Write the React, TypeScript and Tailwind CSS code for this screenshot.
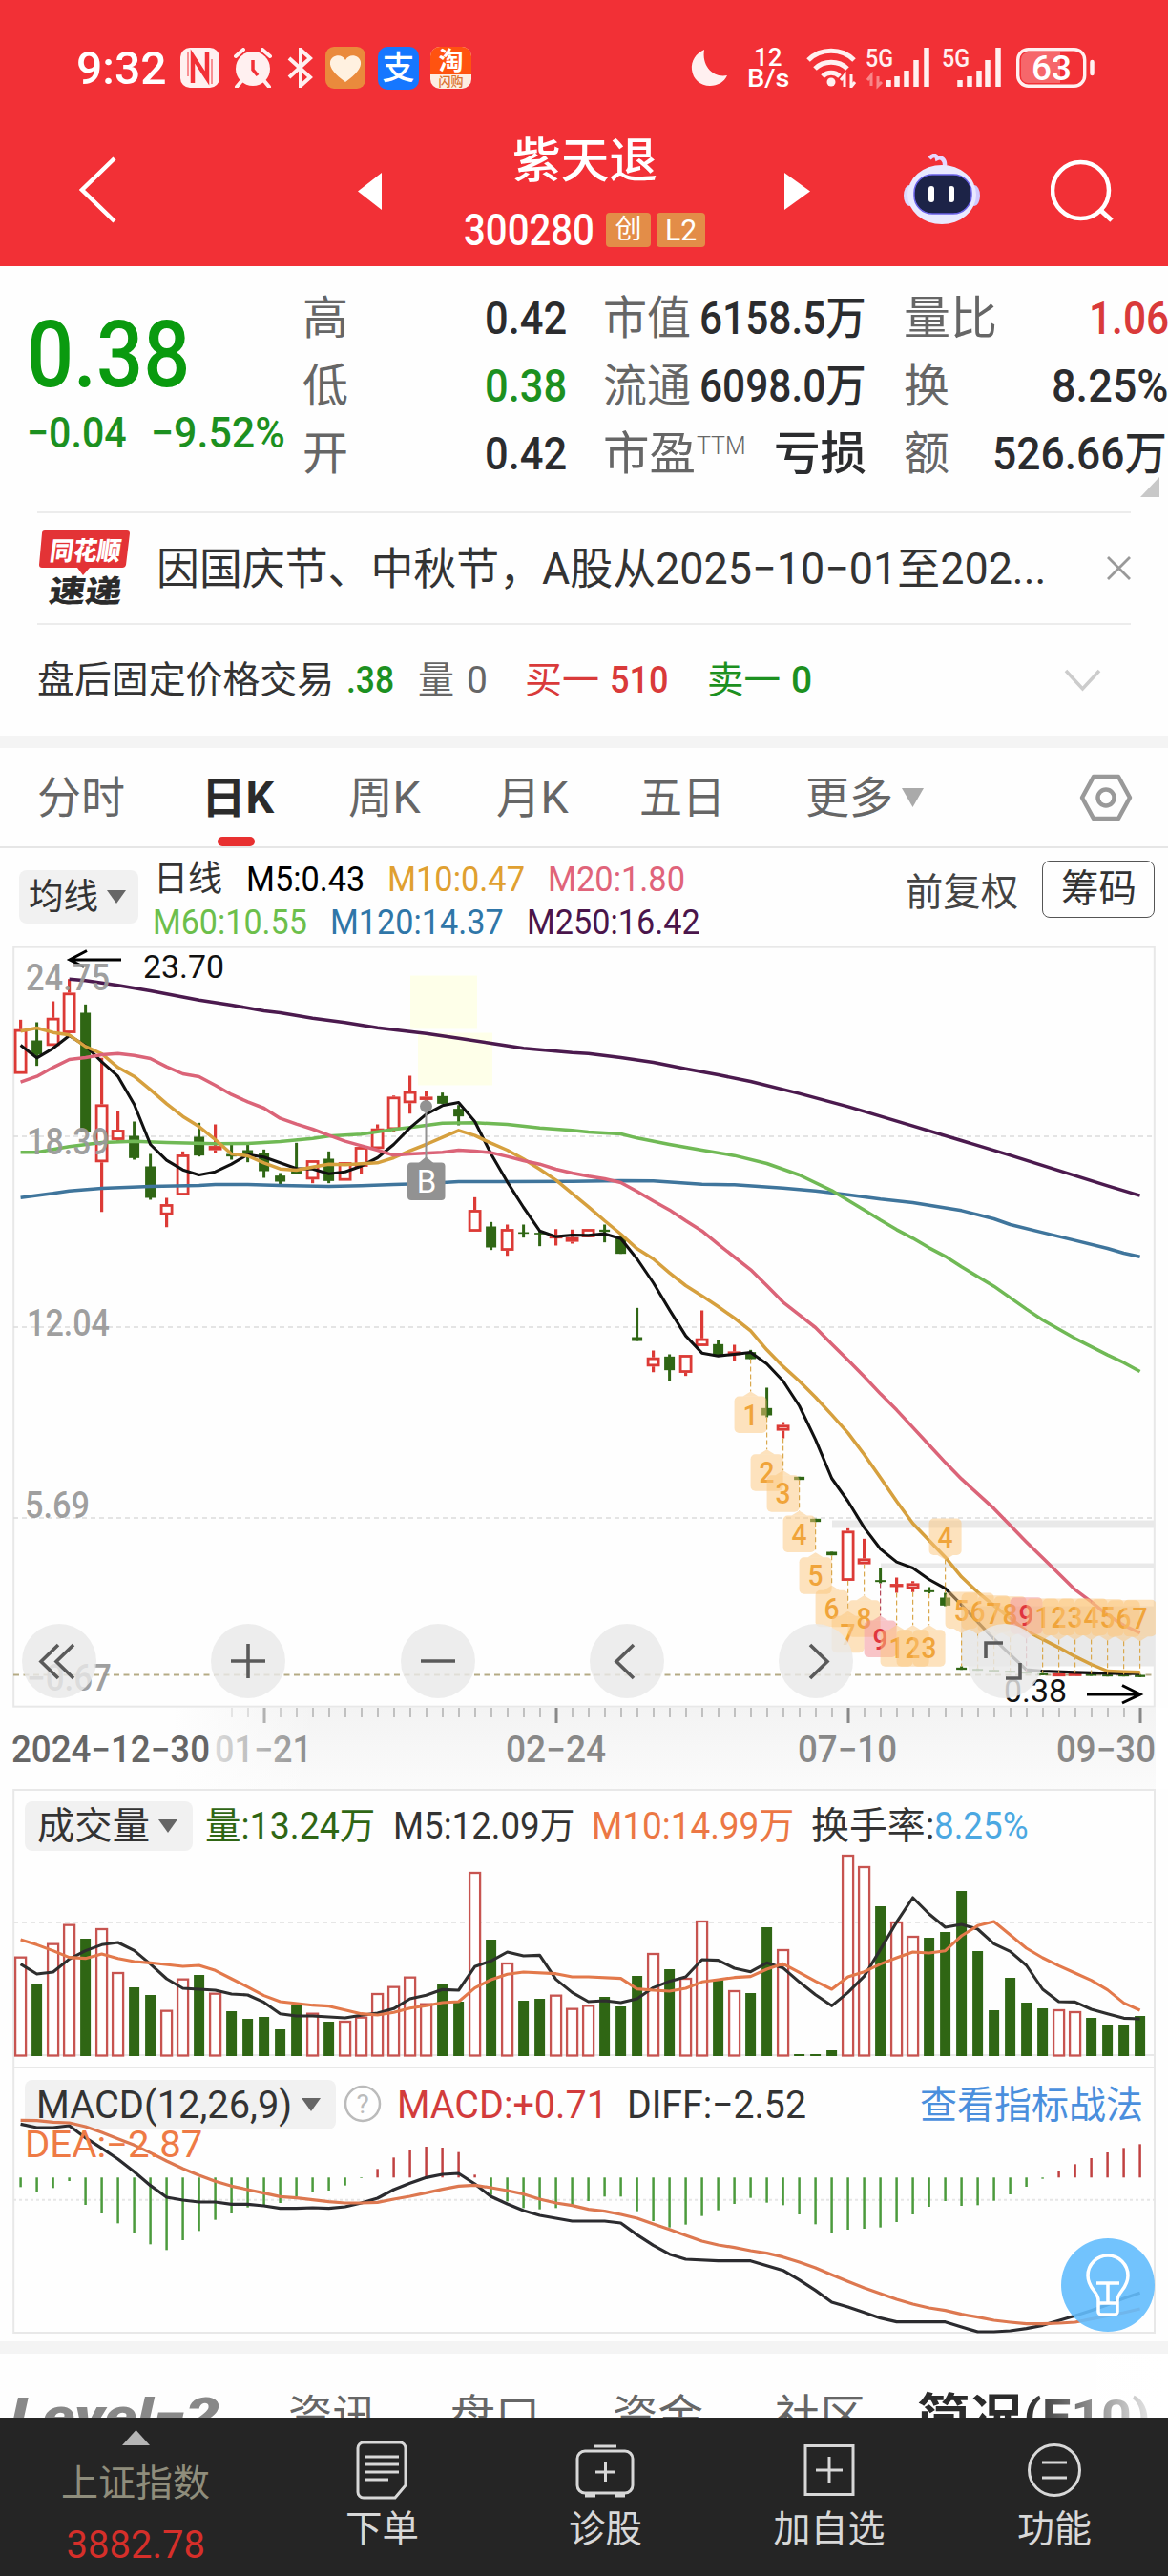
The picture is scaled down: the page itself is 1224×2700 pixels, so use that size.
import { useLayoutEffect, useRef } from "react";
import type { ReactNode } from "react";

/* Text whose glyphs are condensed or widened to fill the width of its box. */
function Fit({ className, children }: { className: string; children: ReactNode }) {
  const box = useRef<HTMLDivElement>(null);
  const inner = useRef<HTMLSpanElement>(null);
  useLayoutEffect(() => {
    if (!box.current || !inner.current) return;
    const k = box.current.clientWidth / inner.current.offsetWidth;
    inner.current.style.transform = `scaleX(${k})`;
  });
  return (
    <div ref={box} className={`flex shrink-0 items-center leading-none whitespace-nowrap ${className}`}>
      <span ref={inner} className="inline-block shrink-0 origin-left">
        {children}
      </span>
    </div>
  );
}

type TProps = { x: number; y: number; w?: number; s: number; fill: string; children: string; weight?: number; anchor?: "start" | "middle" };
const T = ({ x, y, w, s, fill, children, weight = 400, anchor = "start" }: TProps) => (
  <text x={x} y={y} fontSize={s} fill={fill} fontWeight={weight} textAnchor={anchor} textLength={w} lengthAdjust="spacingAndGlyphs">
    {children}
  </text>
);

const RED = "#dc3a36";
const GREEN = "#2f6614";
const px = (i: number) => 21.6 + 17 * i;

/* Chart values are stored in thirds of a pixel below the panel's origin. */
type Pt = [number, number];
const toPoints = (list: Pt[]) => list.map(([i, v]) => `${px(i)},${v / 3}`).join(" ");
const pairs = (s: string): Pt[] => s.split(",").map((p) => p.trim().split(" ").map(Number) as Pt);

const candles = `r 268 298 438 438,g 276 333 378 413,r 210 262 350 350,r 140 183 310 310,g 220 246 620 620,r 388 534 716 872,r 555 614 646 655,g 588 633 703 708,g 690 729 828 834,r 828 848 882 920,r 682 692 820 820,g 592 636 695 698,r 597 665 678 687,g 655 690 698 708,g 660 678 695 716,g 676 688 744 765,g 750 758 777 786,g 655 742 752 752,r 710 710 770 782,g 682 705 775 782,r 716 716 774 774,r 668 668 730 752,r 597 610 674 674,r 506 510 614 620,r 444 493 530 563,r 493 510 520 540,g 497 508 532 532,g 536 548 572 600,r 826 866 934 934,g 904 918 984 992,r 912 926 994 1010,g 912 936 941 953,g 930 938 943 980,r 926 946 954 978,r 928 952 966 972,r 926 926 952 952,g 912 928 935 968,g 946 950 1004 1004,g 1174 1266 1278 1278,r 1308 1330 1358 1376,g 1320 1327 1370 1404,r 1322 1322 1378 1388,r 1182 1270 1294 1294,g 1275 1288 1322 1322,r 1290 1311 1322 1340,g 1306 1313 1335 1335,g 1425 1489 1512 1518,r 1533 1542 1560 1584,g 1705 1705 1715 1715,g 1837 1837 1847 1847,g 1941 1941 1952 1952,r 1867 1875 2032 2032,r 1900 1962 1980 1980,g 1992 2030 2036 2040,r 2022 2042 2050 2070,r 2033 2040 2058 2068,g 2052 2062 2068 2072,g 2070 2085 2110 2112,g 2301 2305 2312 2312,g 2308 2309 2315 2315,g 2312 2312 2318 2318,g 2315 2315 2321 2321,g 2318 2318 2324 2324,g 2322 2323 2329 2329,r 2323 2323 2330 2330,r 2322 2322 2328 2328,g 2325 2325 2331 2331,g 2327 2327 2333 2333,g 2327 2327 2333 2333,g 2328 2328 2335 2335`
  .split(",")
  .map((row) => {
    const [c, ...v] = row.split(" ");
    return { up: c === "r", v: v.map((n) => Number(n) / 3) };
  });

const ma5 = pairs("0 348,1 388,2 358,3 318,4 350,5 400,6 446,7 534,8 660,9 710,10 740,11 756,12 746,13 722,14 692,15 700,16 718,17 736,18 737,19 752,20 746,21 728,22 702,23 660,24 608,25 565,26 538,27 528,28 588,29 690,30 778,31 858,32 932,33 950,34 945,35 946,36 941,37 956,38 1020,39 1095,40 1180,41 1262,42 1316,43 1325,44 1320,45 1314,46 1350,47 1404,48 1482,49 1588,50 1710,51 1782,52 1865,53 1932,54 1973,55 1992,56 2028,57 2056,58 2108,59 2162,60 2215,61 2264,62 2312,63 2316,65 2320,67 2323,69 2324");
const ma10 = pairs("0 304,1 294,2 308,3 316,4 352,5 375,6 418,7 446,8 488,9 532,10 572,11 604,12 645,13 690,14 696,15 718,16 737,17 741,18 731,19 722,20 724,22 718,23 702,24 680,25 660,26 638,27 616,28 632,29 656,30 678,31 706,32 738,33 772,34 814,35 856,36 900,37 942,38 988,39 1020,40 1064,41 1104,42 1136,43 1170,44 1206,45 1246,46 1306,47 1358,48 1404,49 1455,50 1510,51 1567,52 1635,53 1708,54 1782,55 1852,56 1905,57 1958,58 2020,59 2068,60 2110,61 2150,62 2190,63 2216,64 2242,65 2270,66 2295,67 2316,68 2318,69 2320");
const ma20 = pairs("0 464,1 446,2 418,3 393,4 387,5 378,6 374,7 380,8 390,9 416,10 438,11 447,12 474,13 503,14 526,15 546,16 578,17 596,18 612,19 631,20 650,21 664,22 678,23 694,24 690,26 685,27 678,28 681,29 686,30 698,31 711,32 722,33 738,34 750,35 760,36 768,37 780,38 808,39 838,40 866,41 900,42 932,43 974,44 1014,45 1054,46 1104,47 1156,48 1196,49 1236,50 1288,51 1338,52 1390,53 1444,54 1495,55 1550,56 1605,57 1660,58 1712,60 1805,61 1858,62 1910,63 1960,64 2010,65 2060,66 2098,67 2140,68 2172,69 2196");
const ma60 = pairs("0 685,1 685,3 667,5 654,7 650,9 654,12 658,14 657,16 651,18 641,19 634,21 628,23 613,24 607,25 600,26 593,28 592,30 597,32 608,34 616,35 621,37 627,38 640,40 660,42 678,44 695,46 720,48 756,50 805,52 866,53 898,54 928,55 955,56 985,57 1012,58 1045,60 1106,62 1178,63 1212,65 1270,67 1322,68 1346,69 1374");
const ma120 = pairs("0 827,2 814,3 806,5 798,8 792,11 789,12 786,14 786,16 789,19 792,21 790,23 786,25 783,27 777,30 777,34 776,37 774,39 775,42 785,44 787,47 797,49 806,51 818,53 832,55 843,58 868,60 894,61 912,63 937,65 962,67 987,68 1002,69 1013");
const ma250 = pairs("3 140,4 145,6 160,8 177,11 206,13 222,15 240,16 246,18 263,20 277,22 293,25 311,27 326,29 342,31 358,34 371,35 374,37 387,39 402,41 422,43 441,45 462,48 500,51 541,52 556,55 602,58 648,61 694,64 742,67 790,69 821");

const volumes = "r545 g627 r503 r443 g486 r456 r594 g639 g663 r713 r614 g600 r659 g714 g738 g732 g771 g696 r722 g747 r747 r734 r660 r638 r608 r692 g627 g684 r279 g489 r564 g681 g675 r665 r707 r697 g669 g699 g603 r534 g582 r612 r432 g615 r651 g657 g450 r522 g849 g849 g837 r225 r261 g384 r435 r480 g483 g465 g336 g525 g711 g609 g687 g705 r711 r717 g735 g759 g756 g729".split(" ");
const vol5 = pairs("0 566,1 597,2 591,3 550,4 524,5 505,6 498,7 523,8 566,9 612,10 642,12 648,13 660,14 663,15 686,16 722,17 729,18 729,20 735,21 727,22 720,23 706,24 675,25 664,26 646,27 648,28 574,29 556,30 528,31 540,32 538,33 614,34 655,35 684,36 681,37 687,38 675,39 640,40 620,41 606,42 552,43 554,44 579,45 590,46 562,47 578,48 622,49 662,50 697,51 655,52 604,53 520,54 434,55 357,56 408,57 450,58 441,59 456,60 502,61 526,62 570,63 645,64 684,65 685,66 708,67 722,68 736,69 738");
const vol10 = pairs("0 489,1 505,2 524,3 545,4 548,5 534,6 548,7 558,8 562,10 573,11 570,12 586,13 612,14 638,15 665,16 684,18 695,19 698,20 710,21 722,22 726,23 718,24 704,25 697,26 687,27 684,28 641,29 615,30 598,31 591,33 596,34 606,35 606,37 611,38 644,39 648,40 651,41 642,42 622,43 615,44 608,45 605,46 582,47 565,48 592,49 620,50 645,51 606,52 590,53 566,54 546,55 528,56 531,57 524,58 477,59 445,60 432,61 474,62 516,63 546,64 571,65 594,66 617,67 647,68 688,69 711");

const macd = [400, 414, 403, 381, 456, 483, 514, 545, 580, 598, 567, 538, 503, 483, 464, 458, 450, 430, 417, 411, 395, 372, 343, 307, 282, 273, 276, 290, 361, 425, 445, 466, 470, 466, 460, 444, 430, 430, 476, 507, 527, 518, 491, 473, 453, 434, 449, 457, 486, 517, 545, 534, 531, 527, 510, 486, 462, 444, 459, 457, 443, 423, 399, 374, 351, 328, 309, 291, 277, 265];
const diff = pairs("0 202,1 213,2 213,3 207,4 245,5 278,6 312,7 352,8 395,9 432,10 441,11 447,12 447,13 454,14 454,15 459,16 467,17 467,18 465,19 467,20 462,21 450,22 435,23 408,24 388,25 370,26 360,27 357,28 390,29 430,30 453,31 474,32 489,33 498,34 507,36 507,37 513,38 550,39 583,40 611,41 627,43 632,45 632,46 647,47 662,48 692,49 725,50 762,51 777,52 794,53 812,54 824,57 824,58 840,59 855,60 855,61 852,62 845,63 835,64 820,65 805,66 788,67 770,68 750,69 733");
const dea = pairs("0 190,1 191,2 196,3 198,4 210,5 228,6 248,7 268,8 292,9 318,10 342,11 363,12 382,13 397,14 408,15 419,16 430,17 434,18 440,19 446,20 450,21 450,22 448,23 438,24 429,25 418,26 407,27 397,28 394,29 402,30 411,31 422,32 438,33 450,34 458,35 470,36 476,37 486,38 498,39 516,40 533,41 552,42 570,43 582,44 590,45 600,46 608,47 620,48 636,49 654,50 676,51 697,52 717,53 735,54 753,55 768,56 780,57 788,58 800,59 809,60 819,61 825,62 830,63 830,64 828,65 825,66 815,67 805,68 795,69 783");

/* Sequence markers: candle index, label, top of the tag, and which side the tip is on. */
const tags: [number, string, number, "up" | "down"][] = [
  [45, "1", 1452, "up"], [46, "2", 1634, "up"], [47, "3", 1700, "up"], [48, "4", 1827, "up"],
  [49, "5", 1958, "up"], [50, "6", 2062, "up"], [51, "7", 2143, "up"], [52, "8", 2093, "up"],
  [53, "9", 2157, "up"], [54, "1", 2186, "up"], [55, "2", 2186, "up"], [56, "3", 2186, "up"],
  [57, "4", 1836, "down"], [58, "5", 2067, "down"], [59, "6", 2070, "down"], [60, "7", 2078, "down"],
  [61, "8", 2081, "down"], [62, "9", 2084, "down"], [63, "1", 2088, "down"], [64, "2", 2088, "down"],
  [65, "3", 2088, "down"], [66, "4", 2088, "down"], [67, "5", 2090, "down"], [68, "6", 2093, "down"],
  [69, "7", 2092, "down"],
];

const Line = ({ data, color, w = 3.5 }: { data: Pt[]; color: string; w?: number }) => (
  <polyline points={toPoints(data)} fill="none" stroke={color} strokeWidth={w} strokeLinejoin="round" />
);

function StatusBar() {
  return (
    <div className="flex h-[142px] items-center text-white">
      <Fit className="ml-[80px] h-[50px] w-[94px] text-[49px] font-medium">9:32</Fit>
      <svg className="ml-[15px] shrink-0" width="41" height="42" viewBox="0 0 41 42">
        <rect width="41" height="42" rx="10" fill="#fff0f0" />
        <path d="M13 37V9L28 32V5" fill="none" stroke="#f23036" strokeWidth="4.500" />
        <path d="M8 4v26M33 12v26" fill="none" stroke="#f23036" strokeWidth="1" />
      </svg>
      <svg className="ml-[15px] shrink-0" width="40" height="42" viewBox="0 0 40 42">
        <circle cx="20" cy="22" r="18" fill="#fff0f0" />
        <path d="M2 9l8-7M38 9l-8-7M8 35l-5 6M32 35l5 6" stroke="#fff0f0" strokeWidth="4" strokeLinecap="round" />
        <path d="M20 13v10l5 6" fill="none" stroke="#f23036" strokeWidth="3.500" />
      </svg>
      <svg className="ml-[16px] shrink-0" width="27" height="42" viewBox="0 0 27 42">
        <path d="M2 11l22 20-10 9V2l10 9L2 31" fill="none" stroke="#fff0f0" strokeWidth="4" />
      </svg>
      <svg className="ml-[13px] shrink-0" width="42" height="44" viewBox="0 0 42 44">
        <rect width="42" height="44" rx="9" fill="#ea8a3c" />
        <path d="M21 37C10 29 4 22 5 16c1-7 12-10 16-2 4-8 15-5 16 2 1 6-5 13-16 21z" fill="#fff1e0" />
      </svg>
      <div className="ml-[13px] flex h-[45px] w-[43px] shrink-0 items-center justify-center rounded-[10px] bg-[#1677ff] text-[34px] font-medium leading-none">支</div>
      <div className="ml-[12px] flex h-[44px] w-[43px] shrink-0 flex-col overflow-hidden rounded-[10px] bg-[#fdeee2] leading-none">
        <div className="flex h-[29px] items-center justify-center bg-[#ff5310] text-[26px] font-bold">淘</div>
        <div className="flex h-[15px] items-center justify-center text-[13px] font-medium text-[#d9702c]">闪购</div>
      </div>
      <svg className="ml-[230px] shrink-0" width="39" height="40" viewBox="0 0 39 40">
        <path d="M14 1C5 5 0 13 1 22c1 10 9 17 19 17 8 0 15-4 18-11C24 31 11 19 14 1z" fill="#fff0f0" />
      </svg>
      <div className="ml-[20px] flex flex-col items-center gap-[1px] font-medium">
        <Fit className="h-[22px] w-[30px] text-[26px]">12</Fit>
        <Fit className="h-[22px] w-[44px] text-[25px]">B/s</Fit>
      </div>
      <svg className="ml-[18px] shrink-0" width="54" height="42" viewBox="0 0 54 42" fill="none" stroke="#fff0f0" strokeWidth="5">
        <path d="M2 13C15 0 37 0 50 13M9 22c9-9 25-9 34 0M17 30c5-5 13-5 18 0" />
        <circle cx="26" cy="36" r="4.500" fill="#fff0f0" stroke="none" />
        <path d="M40 41V29l-4 5M47 28v13l4-5" strokeWidth="3" />
      </svg>
      <svg className="ml-[8px] shrink-0 overflow-visible" width="70" height="42" viewBox="0 0 70 42">
        <T x={0} y={20} w={29} s={26} weight={500} fill="#fff0f0">5G</T>
        <path d="M24 34v7M33 30v11M43 24v17M53 13v28M64 0v41" stroke="#fff0f0" strokeWidth="5.500" />
        <path d="M6 40V29l-4 5M13 30v10l4-4" stroke="#fff0f0" strokeOpacity="0.45" strokeWidth="3" fill="none" />
      </svg>
      <svg className="ml-[9px] shrink-0 overflow-visible" width="64" height="42" viewBox="0 0 64 42">
        <T x={1} y={20} w={29} s={26} weight={500} fill="#fff0f0">5G</T>
        <path d="M20 34v7M30 30v11M40 24v17M49 13v28M60 0v41" stroke="#fff0f0" strokeWidth="5.500" />
      </svg>
      <svg className="ml-[15px] shrink-0" width="84" height="42" viewBox="0 0 84 42">
        <rect x="1.700" y="1.700" width="70" height="38.500" rx="11" fill="none" stroke="#fff0f0" strokeWidth="3.400" />
        <path d="M12 5h34v32H12a7 7 0 0 1-7-7V12a7 7 0 0 1 7-7z" fill="#f6676b" />
        <path d="M79.500 15v12" stroke="#fff0f0" strokeWidth="4.500" strokeLinecap="round" />
        <T x={16} y={34} w={42} s={36} weight={500} fill="#fff">63</T>
      </svg>
    </div>
  );
}

function TitleBar() {
  return (
    <div className="flex h-[137px] items-start text-white">
      <svg className="mt-[22px] ml-[83px] shrink-0" width="40" height="70" viewBox="0 0 40 70">
        <path d="M37 2L3 35l34 33" fill="none" stroke="#fff" strokeWidth="4.500" />
      </svg>
      <svg className="mt-[39px] ml-[252px] shrink-0" width="25" height="39"><path d="M0 19.500L25 0v39z" fill="#fff" /></svg>
      <div className="ml-[85px] flex w-[256px] shrink-0 flex-col items-center">
        <Fit className="h-[54px] w-[152px] text-[50px] font-medium">紫天退</Fit>
        <div className="mt-[23px] flex h-[44px] w-full items-center">
          <Fit className="ml-[1px] h-[44px] w-[137px] text-[46px] font-medium">300280</Fit>
          <div className="ml-[12px] flex h-[36px] w-[47px] items-center justify-center rounded-[4px] bg-[#e38d48] text-[28px] leading-none">创</div>
          <div className="ml-[6px] flex h-[36px] w-[51px] items-center justify-center rounded-[4px] bg-[#e38d48] text-[32px] leading-none">
            <Fit className="h-[36px] w-[33px]">L2</Fit>
          </div>
        </div>
      </div>
      <svg className="mt-[39px] ml-[81px] shrink-0" width="27" height="39"><path d="M27 19.500L0 0v39z" fill="#fff" /></svg>
      <svg className="mt-[19px] ml-[98px] shrink-0" width="80" height="74" viewBox="0 0 80 74">
        <path d="M27 5c4-4 7-4 8 0 4-2 9 1 8 9" fill="none" stroke="#e6d8ff" strokeWidth="4.500" />
        <ellipse cx="6" cy="44" rx="6" ry="11" fill="#dcd9ff" />
        <ellipse cx="74" cy="44" rx="6" ry="11" fill="#cfcaff" />
        <ellipse cx="40" cy="43" rx="36" ry="31" fill="#e9e9ff" />
        <rect x="11" y="22" width="60" height="41" rx="19" fill="#1c2347" stroke="#6a62e8" strokeWidth="1.500" />
        <rect x="26" y="34" width="6" height="17" rx="3" fill="#fff" />
        <rect x="47" y="34" width="6" height="17" rx="3" fill="#fff" />
      </svg>
      <svg className="mt-[25px] ml-[74px] shrink-0" width="68" height="68" viewBox="0 0 68 68">
        <circle cx="31.500" cy="32.500" r="29.500" fill="none" stroke="#fff" strokeWidth="4.500" />
        <path d="M52 53l12 11" stroke="#fff" strokeWidth="5" />
      </svg>
    </div>
  );
}

function Quotes() {
  return (
    <div className="relative flex h-[257px] overflow-hidden">
      <div className="w-[316px] shrink-0 text-[#0a9a0f]">
        <Fit className="mt-[44px] ml-[28px] h-[98px] w-[171px] text-[97px] font-medium">0.38</Fit>
        <div className="mt-[10px] flex h-[44px] text-[45px] text-[#1c9020]">
          <Fit className="ml-[28px] h-[44px] w-[105px] font-medium">−0.04</Fit>
          <Fit className="ml-[25px] h-[44px] w-[141px] font-medium">−9.52%</Fit>
        </div>
      </div>
      <div className="mt-[19px] flex flex-col text-[48px] text-[#2b2c2e]">
        <div className="flex h-[71px] items-center">
          <Fit className="ml-[1px] h-12 w-[48px] text-[#666]">高</Fit>
          <Fit className="ml-[143px] h-12 w-[86px] font-medium">0.42</Fit>
          <Fit className="ml-[38px] h-12 w-[92px] text-[#666]">市值</Fit>
          <Fit className="ml-[9px] h-12 w-[175px] font-medium">6158.5万</Fit>
          <Fit className="ml-[39px] h-12 w-[98px] text-[#666]">量比</Fit>
          <Fit className="ml-[96px] h-12 w-[84px] font-medium text-[#d93a3a]">1.06</Fit>
        </div>
        <div className="flex h-[71px] items-center">
          <Fit className="ml-[1px] h-12 w-[48px] text-[#666]">低</Fit>
          <Fit className="ml-[143px] h-12 w-[86px] font-medium text-[#1c9020]">0.38</Fit>
          <Fit className="ml-[38px] h-12 w-[92px] text-[#666]">流通</Fit>
          <Fit className="ml-[9px] h-12 w-[175px] font-medium">6098.0万</Fit>
          <Fit className="ml-[39px] h-12 w-[48px] text-[#666]">换</Fit>
          <Fit className="ml-[107px] h-12 w-[123px] font-medium">8.25%</Fit>
        </div>
        <div className="flex h-[71px] items-center">
          <Fit className="ml-[1px] h-12 w-[48px] text-[#666]">开</Fit>
          <Fit className="ml-[143px] h-12 w-[86px] font-medium">0.42</Fit>
          <Fit className="ml-[38px] h-12 w-[97px] text-[#666]">市盈</Fit>
          <Fit className="mb-[16px] ml-[1px] h-6 w-[52px] text-[25px] font-light text-[#666]">TTM</Fit>
          <Fit className="ml-[29px] h-12 w-[97px] font-medium">亏损</Fit>
          <Fit className="ml-[39px] h-12 w-[48px] text-[#666]">额</Fit>
          <Fit className="ml-[45px] h-12 w-[183px] font-medium">526.66万</Fit>
        </div>
      </div>
      <svg className="absolute right-[9px] bottom-[15px]" width="20" height="21"><path d="M20 0v21H0z" fill="#c8c8c8" /></svg>
    </div>
  );
}

function News() {
  return (
    <>
      <div className="mx-[39px] flex h-[117px] items-center border-t-2 border-[#ececec] text-[46px] text-[#333]">
        <svg className="mb-[3px] shrink-0 overflow-visible" width="98" height="80" viewBox="0 0 98 80">
          <path d="M8 2h86a3 3 0 0 1 3 3l-4 33a4 4 0 0 1-4 3H55l-7 8-6-8H5a3 3 0 0 1-3-3L5 5a3 3 0 0 1 3-3z" fill="#e33336" />
          <g transform="skewX(-8)">
            <T x={17} y={33} w={74} s={27} weight={900} fill="#fff">同花顺</T>
            <T x={22} y={77} w={76} s={32} weight={900} fill="#2b2b2b">速递</T>
          </g>
        </svg>
        <Fit className="ml-[27px] h-[50px] w-[932px]">因国庆节、中秋节，A股从2025−10−01至202...</Fit>
        <svg className="ml-[63px] shrink-0" width="27" height="27" viewBox="0 0 27 27"><path d="M2 2l23 23M25 2L2 25" stroke="#999" strokeWidth="2.800" /></svg>
      </div>
      <div className="mx-[39px] flex h-[118px] items-center border-t-2 border-[#ececec] text-[39px] text-[#333]">
        <Fit className="h-[44px] w-[311px]">盘后固定价格交易</Fit>
        <Fit className="ml-[13px] h-[44px] w-[50px] font-medium text-[#1c9020]">.38</Fit>
        <Fit className="ml-[25px] h-[44px] w-[38px] text-[#666]">量</Fit>
        <Fit className="ml-[13px] h-[44px] w-[22px] text-[#666]">0</Fit>
        <Fit className="ml-[39px] h-[44px] w-[78px] text-[#d93a3a]">买一</Fit>
        <Fit className="ml-[11px] h-[44px] w-[62px] font-medium text-[#d93a3a]">510</Fit>
        <Fit className="ml-[40px] h-[44px] w-[77px] text-[#1c9020]">卖一</Fit>
        <Fit className="ml-[11px] h-[44px] w-[22px] font-medium text-[#1c9020]">0</Fit>
        <svg className="ml-[264px] shrink-0" width="39" height="24" viewBox="0 0 39 24"><path d="M2 2l17.500 19L37 2" fill="none" stroke="#ccc" strokeWidth="3.500" /></svg>
      </div>
      <div className="h-[13px] bg-[#f4f4f4]" />
    </>
  );
}

function PeriodTabs() {
  return (
    <div className="flex h-[105px] items-center border-b-2 border-[#e6e6e6] text-[46px] text-[#666]">
      <Fit className="ml-[39px] h-[52px] w-[92px]">分时</Fit>
      <div className="relative ml-[80px] flex h-full items-center font-bold text-[#2b2b2b]">
        <Fit className="h-[52px] w-[76px]">日K</Fit>
        <div className="absolute bottom-0 left-[17px] h-[10px] w-[39px] rounded-[5px] bg-[#e83030]" />
      </div>
      <Fit className="ml-[78px] h-[52px] w-[76px]">周K</Fit>
      <Fit className="ml-[79px] h-[52px] w-[76px]">月K</Fit>
      <Fit className="ml-[74px] h-[52px] w-[90px]">五日</Fit>
      <Fit className="ml-[84px] h-[52px] w-[92px]">更多</Fit>
      <svg className="ml-[8px] shrink-0" width="25" height="20"><path d="M1 0h23l-11.500 20z" fill="#aaa" /></svg>
      <svg className="ml-[162px] shrink-0" width="56" height="50" viewBox="0 0 56 50" fill="none" stroke="#999" strokeWidth="4.500" strokeLinejoin="round">
        <path d="M15 3h26l12 22-12 22H15L3 25z" />
        <circle cx="28" cy="25" r="8.500" />
      </svg>
    </div>
  );
}

function Averages() {
  return (
    <div className="flex h-[103px] items-start text-[37px] text-[#333]">
      <div className="mt-[23px] ml-[20px] flex h-[56px] w-[125px] shrink-0 items-center rounded-[8px] bg-[#f1f1f1]">
        <Fit className="ml-[10px] h-[44px] w-[73px]">均线</Fit>
        <svg className="ml-[9px]" width="20" height="14"><path d="M0 0h20L10 14z" fill="#666" /></svg>
      </div>
      <div className="ml-[16px] flex w-[600px] shrink-0 flex-col pt-[10px]">
        <div className="flex h-[45px] items-center">
          <Fit className="h-[40px] w-[72px]">日线</Fit>
          <Fit className="ml-[25px] h-[40px] w-[124px] text-black">M5:0.43</Fit>
          <Fit className="ml-[24px] h-[40px] w-[144px] text-[#e0a030]">M10:0.47</Fit>
          <Fit className="ml-[24px] h-[40px] w-[144px] text-[#e0647a]">M20:1.80</Fit>
        </div>
        <div className="flex h-[45px] items-center">
          <Fit className="-ml-[1px] h-[40px] w-[162px] text-[#6cbf4b]">M60:10.55</Fit>
          <Fit className="ml-[24px] h-[40px] w-[182px] text-[#2f76a8]">M120:14.37</Fit>
          <Fit className="ml-[24px] h-[40px] w-[182px] text-[#4a154b]">M250:16.42</Fit>
        </div>
      </div>
      <Fit className="mt-[24px] ml-[188px] h-[46px] w-[118px] text-[40px] text-[#444]">前复权</Fit>
      <div className="mt-[13px] ml-[25px] flex h-[60px] w-[118px] shrink-0 items-center justify-center rounded-[8px] border-[1.5px] border-[#555]">
        <Fit className="h-[46px] w-[79px] text-[40px]">筹码</Fit>
      </div>
    </div>
  );
}

function CandleChart() {
  return (
    <div className="relative mx-[13px] h-[798px]">
      <svg className="block" width="1198" height="798" viewBox="13 12.500 1198 798">
        <rect x="14.200" y="13.200" width="1195.600" height="796" fill="#fefefe" stroke="#e8e8e8" strokeWidth="2" />
        <path d="M14 211.500H1210M14 411.500H1210M14 611.500H1210" stroke="#dcdcdc" strokeWidth="1.300" strokeDasharray="5 4" />
        <path d="M430 43h70v56h-70zM438 103h78v55h-78z" fill="#feffe9" />
        <path d="M872 614h338v8H872zM923 659h287v5H923zM1007 704h203v63h-203z" fill="#e9e9e9" />
        <path d="M14 776H1210" stroke="#b5ab85" strokeWidth="2" strokeDasharray="6 4.500" />
        {candles.map(({ up, v: [h, t, b, l] }, i) => (
          <g key={i}>
            {up ? (
              <>
                <path d={`M${px(i)} ${h}V${t}M${px(i)} ${b}V${l}`} stroke={RED} strokeWidth="3.200" />
                <rect x={px(i) - 5.5} y={t + 1.3} width="11" height={Math.max(b - t - 2.6, 0.6)} fill="#fff" stroke={RED} strokeWidth="2.800" />
              </>
            ) : (
              <>
                <path d={`M${px(i)} ${h}V${l}`} stroke={GREEN} strokeWidth="3" />
                <rect x={px(i) - 5.5} y={t} width="11" height={b - t} fill={GREEN} />
              </>
            )}
          </g>
        ))}
        <Line data={ma250} color="#4b1a4e" />
        <Line data={ma120} color="#3f759c" />
        <Line data={ma60} color="#70b955" />
        <Line data={ma5} color="#111" w={3.1} />
        <Line data={ma10} color="#d6a03e" />
        <Line data={ma20} color="#db6478" />
        {tags.map(([i, label, top, tip]) => {
          const x = px(i);
          const y = top / 3;
          const c = candles[i].v;
          const hot = label === "9";
          const line = tip === "up" ? `M${x} ${c[3]}V${y - 5}` : `M${x} ${y + 43}V${c[0]}`;
          const arrow = tip === "up" ? `M${x - 8} ${y}l8 -5 8 5z` : `M${x - 8} ${y + 38.5}l8 5 8 -5z`;
          return (
            <g key={i}>
              <path d={line} stroke={hot ? "#b5485a" : "#d9a84e"} strokeWidth="1.200" strokeDasharray="5 3" />
              <g fill={hot ? "#f28a90" : "#fcc67c"} fillOpacity="0.5">
                <rect x={x - 17} y={y} width="34" height="38.500" rx="5" />
                <path d={arrow} />
              </g>
              <T x={x - 8} y={y + 30} w={16} s={32} weight={500} fill={hot ? "#e0353f" : "#f0a43a"}>{label}</T>
            </g>
          );
        })}
        <g>
          <circle cx="446.500" cy="180" r="6.500" fill="#929292" />
          <path d="M446.500 180v60" stroke="#929292" strokeWidth="2" />
          <path d="M438 240l8.500-7 8.500 7z" fill="#929292" />
          <rect x="427" y="239" width="39.500" height="39.500" rx="4" fill="#929292" />
          <T x={447} y={270} s={33} fill="#fff" anchor="middle">B</T>
        </g>
        <path d="M127 26.500H73M91 17L73 26.500 88 34" fill="none" stroke="#000" strokeWidth="3" />
        <T x={150} y={45} w={85} s={34} fill="#111">23.70</T>
        <g fillOpacity="0.95">
          <T x={27} y={58} w={88} s={38} weight={500} fill="#999">24.75</T>
          <T x={28} y={230} w={87} s={38} weight={500} fill="#999">18.39</T>
          <T x={28} y={420} w={87} s={38} weight={500} fill="#999">12.04</T>
          <T x={26} y={611} w={68} s={38} weight={500} fill="#999">5.69</T>
          <T x={28} y={792} w={89} s={38} weight={500} fill="#999">−0.67</T>
        </g>
        <T x={1052} y={804} w={66} s={33} fill="#111">0.38</T>
        <path d="M1139 796.500h55M1176 787l19 9.500-19 9" fill="none" stroke="#000" strokeWidth="3" />
      </svg>
      <div className="absolute top-[710px] left-[10px] flex gap-[120.3px]">
        {[
          "M38 22L20 39.500 38 57M54 22L36 39.500 54 57",
          "M21 39h36M39 21v36",
          "M21 39h36",
          "M46 22L28 39.500 46 57",
          "M33 22l18 17.500L33 57",
          "M19 36V20h18M55 41v16H40",
        ].map((d) => (
          <svg key={d} width="78" height="78" viewBox="0 0 78 78">
            <circle cx="39" cy="39" r="39" fill="#e9e9e9" fillOpacity="0.82" />
            <path d={d} fill="none" stroke="#5a5a5a" strokeWidth="3.600" />
          </svg>
        ))}
      </div>
    </div>
  );
}

function DateAxis() {
  const ticks = Array.from({ length: 57 }, (_, k) => k + 13);
  return (
    <div className="h-[85px] bg-linear-to-b from-[#f3f3f3] to-[#fbfbfb]">
      <svg className="block" width="1224" height="85" viewBox="0 0 1224 85">
        <defs>
          <linearGradient id="fade" x1="0" x2="1">
            <stop offset="0" stopColor="#fefefe" />
            <stop offset="0.550" stopColor="#fefefe" />
            <stop offset="1" stopColor="#fefefe" stopOpacity="0" />
          </linearGradient>
        </defs>
        {ticks.map((i) => {
          const major = (i - 15) % 18 === 0;
          return <path key={i} d={`M${px(i) + 0.4} 0V${major ? 16 : 10}`} stroke={major ? "#888" : "#bbb"} strokeWidth={major ? 3 : 1.8} />;
        })}
        <T x={225} y={57} w={102} s={38} weight={500} fill="#888">01−21</T>
        <rect width="330" height="85" fill="url(#fade)" />
        <rect x="1211" width="13" height="85" fill="#fff" />
        <T x={530} y={57} w={105} s={38} weight={500} fill="#888">02−24</T>
        <T x={836} y={57} w={104} s={38} weight={500} fill="#888">07−10</T>
        <T x={1107} y={57} w={104} s={38} weight={500} fill="#888">09−30</T>
        <T x={12} y={57} w={208} s={38} weight={500} fill="#666">2024−12−30</T>
      </svg>
    </div>
  );
}

function VolumePanel() {
  return (
    <div className="relative mx-[13px] h-[291px]">
      <svg className="block" width="1198" height="291" viewBox="13 5 1198 291">
        <path d="M14.200 296V6H1210v290M14 284H1210" fill="none" stroke="#e8e8e8" strokeWidth="2" />
        <path d="M14 145H1210" stroke="#e6e6e6" strokeWidth="2" strokeDasharray="5 4" />
        {volumes.map((item, i) => {
          const top = Number(item.slice(1)) / 3;
          return item[0] === "r" ? (
            <rect key={i} x={px(i) - 5.5} y={top} width="11" height={284.5 - top} fill="#fff" stroke="#c75450" strokeWidth="2.300" />
          ) : (
            <rect key={i} x={px(i) - 5.5} y={top} width="11" height={285 - top} fill={GREEN} />
          );
        })}
        <Line data={vol5} color="#2e2e2e" w={3.1} />
        <Line data={vol10} color="#e3794b" w={3.1} />
      </svg>
      <div className="absolute top-[13px] left-[13px] flex h-[52px] items-center text-[39px] text-[#333]">
        <div className="flex h-[52px] w-[176px] items-center rounded-[8px] bg-[#f1f1f1]">
          <Fit className="ml-[13px] h-[44px] w-[118px]">成交量</Fit>
          <svg className="ml-[9px]" width="20" height="14"><path d="M0 0h20L10 14z" fill="#666" /></svg>
        </div>
        <Fit className="ml-[13px] h-[44px] w-[178px] text-[#2f6614]">量:13.24万</Fit>
        <Fit className="ml-[19px] h-[44px] w-[190px]">M5:12.09万</Fit>
        <Fit className="ml-[18px] h-[44px] w-[212px] text-[#ec7744]">M10:14.99万</Fit>
        <Fit className="ml-[18px] h-[44px] w-[129px]">换手率:</Fit>
        <Fit className="h-[44px] w-[99px] text-[#4ba8e2]">8.25%</Fit>
      </div>
    </div>
  );
}

function MacdPanel() {
  return (
    <div className="relative mx-[13px] h-[280px]">
      <div className="absolute top-[14px] left-[13px] h-[52px] w-[326px] rounded-[8px] bg-[#f1f1f1]" />
      <svg className="relative block" width="1198" height="280" viewBox="13 7 1198 280">
        <path d="M14.200 8H1210v278H14.200z" fill="none" stroke="#e8e8e8" strokeWidth="2" />
        <path d="M14 146.700H1210" stroke="#e6e6e6" strokeWidth="2" strokeDasharray="3 3" />
        {macd.map((v, i) => (
          <path key={i} d={`M${px(i)} 123.300V${v / 3}`} stroke={v > 370 ? "#4b9a3c" : "#c04040"} strokeWidth="2.500" />
        ))}
        <Line data={diff} color="#2b2b2f" w={3.2} />
        <Line data={dea} color="#dd7850" w={3.2} />
        <circle cx="380" cy="46" r="18" fill="none" stroke="#bbb" strokeWidth="2.500" />
        <T x={380} y={56} s={28} fill="#bbb" anchor="middle">?</T>
        <path d="M316 40h20l-10 14z" fill="#666" />
      </svg>
      <div className="absolute top-[19px] left-[25px] flex h-[44px] text-[40px] text-[#333]">
        <Fit className="h-[44px] w-[268px]">MACD(12,26,9)</Fit>
        <Fit className="ml-[110px] h-[44px] w-[221px] text-[#d23c3c]">MACD:+0.71</Fit>
        <Fit className="ml-[20px] h-[44px] w-[188px]">DIFF:−2.52</Fit>
        <Fit className="ml-[119px] h-[44px] w-[234px] text-[#4a8fdd]">查看指标战法</Fit>
      </div>
      <Fit className="absolute top-[61px] left-[13px] h-[42px] w-[186px] text-[38px] text-[#ee7a45]">DEA:−2.87</Fit>
      <svg className="absolute top-[179px] left-[1098px]" width="100" height="100" viewBox="0 0 100 100">
        <circle cx="50" cy="50" r="49" fill="#63bcfd" fillOpacity="0.9" />
        <g fill="none" stroke="#fff" strokeWidth="3.500">
          <path d="M40 66c0-9-11-12-11-26a21 21 0 0 1 42 0c0 14-11 17-11 26v12a3 3 0 0 1-3 3H43a3 3 0 0 1-3-3z" />
          <path d="M40 69h20M38 48h24M50 48v20" />
        </g>
      </svg>
    </div>
  );
}

function InfoTabs() {
  return (
    <div className="relative flex h-[67px] items-start overflow-hidden pt-[38px] text-[46px] text-[#666]">
      <Fit className="ml-[11px] h-[54px] w-[220px] text-[50px] font-black text-[#888] italic">Level−2</Fit>
      <Fit className="ml-[71px] h-[54px] w-[93px]">资讯</Fit>
      <Fit className="ml-[77px] h-[54px] w-[94px]">盘口</Fit>
      <Fit className="ml-[76px] h-[54px] w-[95px]">资金</Fit>
      <Fit className="ml-[75px] h-[54px] w-[95px]">社区</Fit>
      <Fit className="ml-[54px] h-[54px] w-[244px] text-[49px] font-bold text-[#2b2b2b]">简况(F10)</Fit>
      <div className="absolute inset-y-0 right-0 w-[150px] bg-linear-to-r from-white/0 to-white" />
    </div>
  );
}

function BottomNav() {
  return (
    <div className="flex h-[166px] items-start overflow-hidden bg-[#252525] text-[39px] text-[#d8d8d8]">
      <div className="flex w-[284px] shrink-0 flex-col items-center pt-[13px]">
        <svg width="29" height="16"><path d="M0 16h29L14.500 0z" fill="#b5b5b5" /></svg>
        <Fit className="mt-[17px] h-[46px] w-[156px] text-[#8f8d7c]">上证指数</Fit>
        <Fit className="mt-[21px] h-[42px] w-[145px] text-[40px] text-[#d62f2a]">3882.78</Fit>
      </div>
      <div className="flex w-[232px] shrink-0 flex-col items-center pt-[24px]">
        <svg width="56" height="62" viewBox="0 0 56 62" fill="none" stroke="#d8d8d8" strokeWidth="3">
          <path d="M9 2h38a6 6 0 0 1 6 6v39L42 60H9a6 6 0 0 1-6-6V8a6 6 0 0 1 6-6z" />
          <path d="M10 17h36M10 25h36M10 33h36M10 41h25" />
        </svg>
        <Fit className="mt-[8px] h-[46px] w-[77px]">下单</Fit>
      </div>
      <div className="flex w-[236px] shrink-0 flex-col items-center pt-[24px]">
        <svg width="64" height="62" viewBox="0 0 64 62" fill="none" stroke="#d8d8d8" strokeWidth="3">
          <path d="M20 6h24M11 11h42a8 8 0 0 1 8 8v28a8 8 0 0 1-8 8H11a8 8 0 0 1-8-8V19a8 8 0 0 1 8-8zM22 33h21M32.500 23v20M11 58h11M42 58h11" />
        </svg>
        <Fit className="mt-[8px] h-[46px] w-[77px]">诊股</Fit>
      </div>
      <div className="flex w-[234px] shrink-0 flex-col items-center pt-[24px]">
        <svg width="56" height="62" viewBox="0 0 56 62" fill="none" stroke="#d8d8d8" strokeWidth="3">
          <path d="M3 5.500h50v51H3zM14 31h28M28 17v28" />
        </svg>
        <Fit className="mt-[8px] h-[46px] w-[117px]">加自选</Fit>
      </div>
      <div className="flex w-[238px] shrink-0 flex-col items-center pt-[24px]">
        <svg width="58" height="62" viewBox="0 0 58 62" fill="none" stroke="#d8d8d8" strokeWidth="3">
          <circle cx="29" cy="31" r="26.500" />
          <path d="M16 23h26M16 39h26" />
        </svg>
        <Fit className="mt-[8px] h-[46px] w-[78px]">功能</Fit>
      </div>
    </div>
  );
}

export default function App() {
  return (
    <div className="h-[2700px] w-[1224px] overflow-hidden bg-[#fefefe] font-[Roboto,'Noto_Sans_CJK_SC',sans-serif]">
      <div className="bg-[#f23036]">
        <StatusBar />
        <TitleBar />
      </div>
      <Quotes />
      <News />
      <PeriodTabs />
      <Averages />
      <CandleChart />
      <DateAxis />
      <VolumePanel />
      <MacdPanel />
      <div className="mt-[8px] h-[13px] bg-[#f4f4f4]" />
      <InfoTabs />
      <BottomNav />
    </div>
  );
}
